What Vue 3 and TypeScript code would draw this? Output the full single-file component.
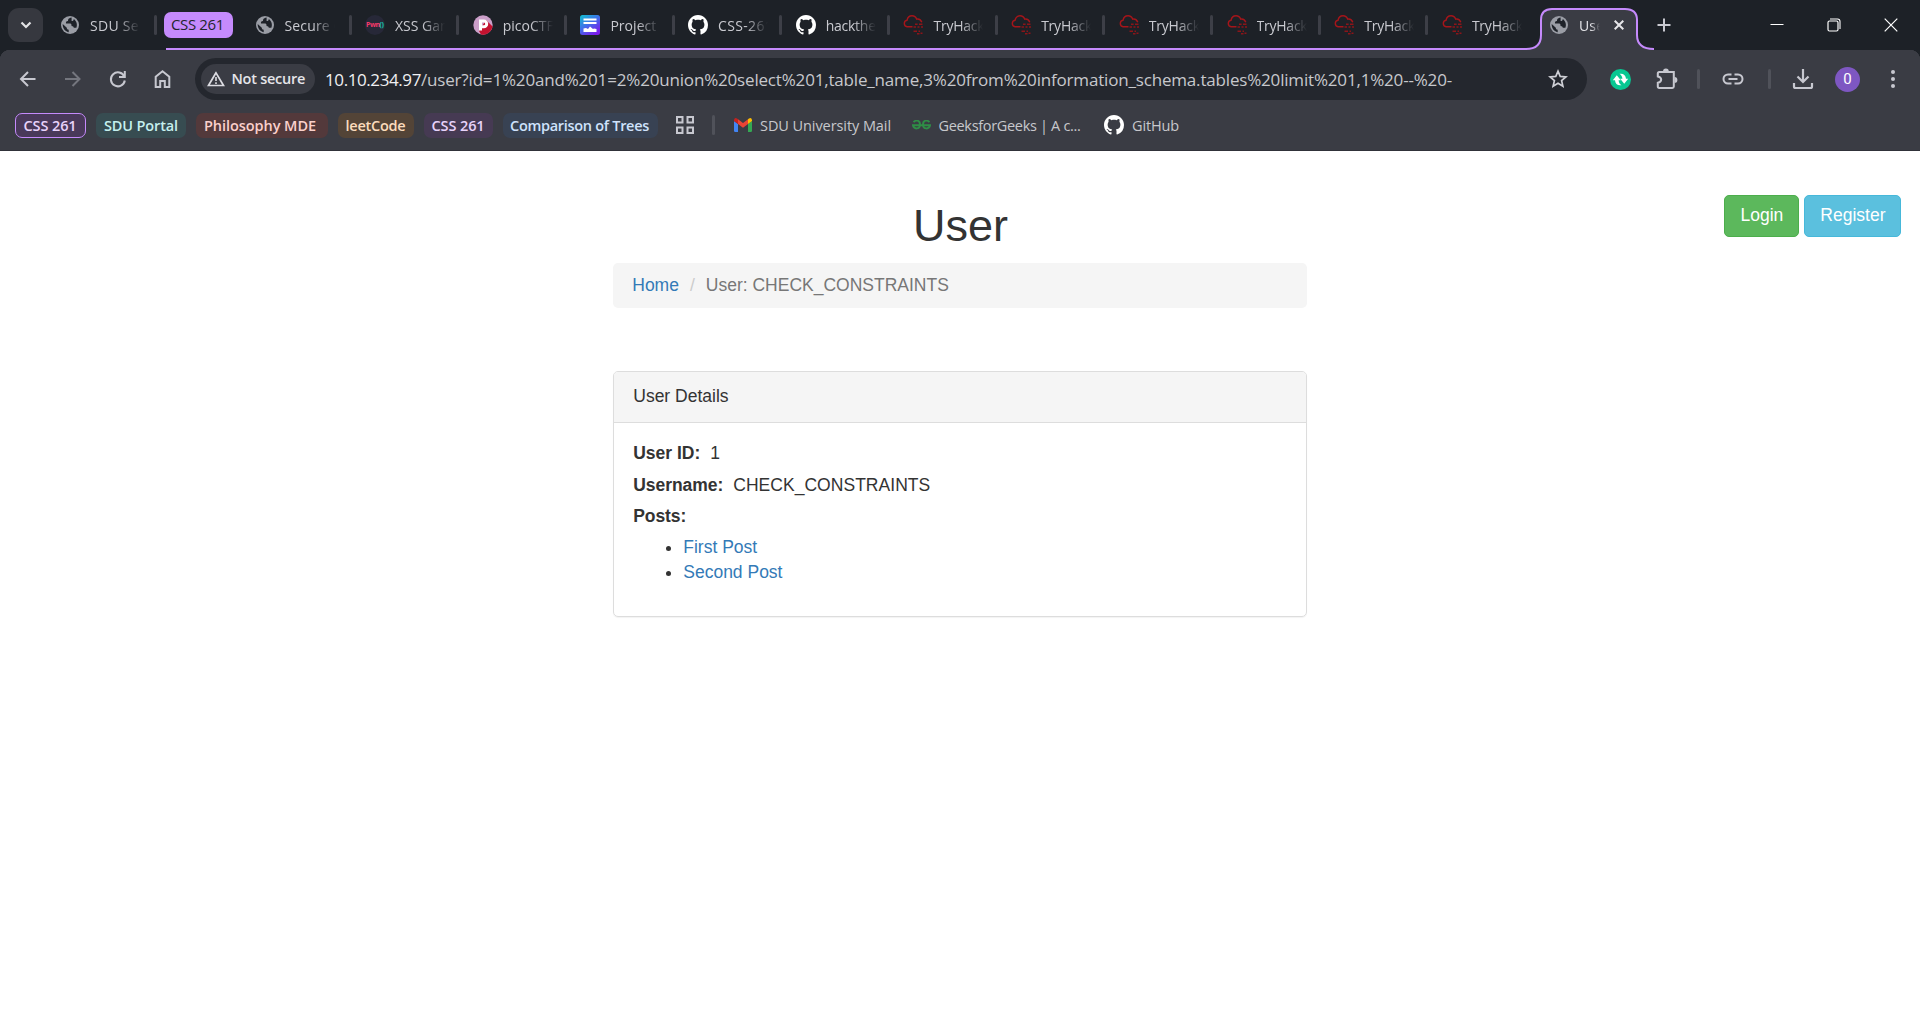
<script setup lang="ts">
import type { Directive } from 'vue'

interface Tab { icon: string; title: string; w: number }
interface Group { label: string; w: number; tw: number; pad: number; bg: string; fg: string; open?: boolean }

const tabs: Tab[] = [
  { icon: 'globe', title: 'Secure C', w: 58 },
  { icon: 'pwn', title: 'XSS Gam', w: 58 },
  { icon: 'pico', title: 'picoCTF', w: 51 },
  { icon: 'project', title: 'Project', w: 46 },
  { icon: 'github', title: 'CSS-261', w: 55 },
  { icon: 'github', title: 'hackthe', w: 50 },
  ...Array.from({ length: 6 }, () => ({ icon: 'thm', title: 'TryHack', w: 51 })),
]

const groups: Group[] = [
  { label: 'CSS 261', w: 71, tw: 53, pad: 7.5, bg: '#49395a', fg: '#e8d3fb', open: true },
  { label: 'SDU Portal', w: 90, tw: 74, pad: 8, bg: '#374c51', fg: '#c5f0ee' },
  { label: 'Philosophy MDE', w: 132, tw: 112, pad: 8, bg: '#53393b', fg: '#fbd0cb' },
  { label: 'leetCode', w: 76, tw: 60, pad: 7.5, bg: '#534437', fg: '#fbdcbd' },
  { label: 'CSS 261', w: 69, tw: 53, pad: 7.5, bg: '#463a53', fg: '#e8d3fb' },
  { label: 'Comparison of Trees', w: 155, tw: 139, pad: 7, bg: '#384253', fg: '#cfe2fc' },
]

// Spreads or tightens a label so that it fills the given width.
const vFit: Directive<HTMLElement, number> = {
  mounted(el, { value }) {
    const n = (el.textContent ?? '').length
    const spacing = (value - el.getBoundingClientRect().width) / n
    el.style.letterSpacing = `${spacing}px`
  },
}
</script>

<template>
  <svg width="0" height="0" class="defs">
    <symbol id="globe" viewBox="0 0 20 20">
      <circle cx="10" cy="10" r="9" fill="#9a9da5" />
      <path d="M11.6 2.6C8 3.6 8.200 4.400 8 6c-1.900.2-2.200 1.100-2 2.400h4.200c1.300.2 1.400 1.400 1.300 2.500 1.700.1 2 .6 2.300 1.800h2.600c1.300-3.500 0-7-2.600-8.800 0 1.400-.8 2.100-2.200 2V2.600zM2.700 9c-.2 4 2 7.300 6 8.200v-2.400c-1.300-.2-1.900-.9-1.900-2.100z" fill="#1e2229" class="land" />
    </symbol>
    <symbol id="pwn" viewBox="0 0 20 20"><circle cx="10" cy="10" r="10" fill="#272838" /></symbol>
    <symbol id="pico" viewBox="0 0 20 20">
      <circle cx="10" cy="10" r="9.700" fill="#cb9fc9" />
      <path d="M13 5l6.600 6.500A9.700 9.700 0 0 1 8 19.500L6 16z" fill="#c4122f" />
      <path d="M7.500 15.500V6h3.300a2.900 2.900 0 0 1 0 5.800H8" fill="none" stroke="#fff" stroke-width="3" />
    </symbol>
    <symbol id="project" viewBox="0 0 20 20">
      <defs><linearGradient id="pg" x1="0" y1="0" x2=".7" y2="1"><stop offset="0" stop-color="#10c3cf" /><stop offset=".5" stop-color="#3f70ea" /><stop offset="1" stop-color="#7a1bea" /></linearGradient></defs>
      <rect width="20" height="20" rx="2.500" fill="url(#pg)" />
      <path d="M3.500 3.500h13v2h-13zM3.500 7h13v2h-13zM3.500 17v-3.500l2.500-.5 2 1 2-2.500 3 2.500 1-.5 2.500.5v3z" fill="#fff" />
    </symbol>
    <symbol id="github" viewBox="0 0 16 16">
      <path fill="#fff" d="M8 0C3.580 0 0 3.580 0 8c0 3.540 2.290 6.530 5.470 7.590.4.070.55-.17.55-.38 0-.19-.01-.82-.01-1.490-2.010.37-2.530-.49-2.690-.94-.09-.23-.48-.94-.82-1.130-.28-.15-.68-.52-.01-.53.63-.01 1.080.58 1.230.82.72 1.210 1.870.87 2.330.66.07-.52.28-.87.51-1.070-1.780-.2-3.640-.89-3.640-3.950 0-.87.31-1.590.82-2.150-.08-.2-.36-1.020.08-2.120 0 0 .67-.21 2.200.82.64-.18 1.320-.27 2-.27s1.360.09 2 .27c1.530-1.040 2.200-.82 2.200-.82.44 1.100.16 1.920.08 2.120.51.56.82 1.270.82 2.150 0 3.070-1.870 3.750-3.650 3.950.29.25.54.73.54 1.480 0 1.070-.01 1.930-.01 2.200 0 .21.15.46.55.38A8.010 8.010 0 0 0 16 8c0-4.420-3.580-8-8-8z" />
    </symbol>
    <symbol id="thm" viewBox="0 0 20 20">
      <path d="M9.500 11.800H4.100a3.300 3.300 0 0 1-.1-6.500C4.600 2.500 6.500.8 9 .8c2.300 0 3.900 1.300 4.600 3.300 2.400-.4 4.500 1.100 5.200 3.200" fill="none" stroke="#a5151a" stroke-width="1.400" />
      <path d="M12 9.300h2.600M16 9.300h3.500M10.500 12h2.500M14.500 12h2M18 12h2M10.500 16.300h3.500M15.500 16.300h1.500M14 18.800h2.500M17.500 18.300h2" stroke="#8c1519" stroke-width="1.500" />
    </symbol>
  </svg>

  <div class="browser">
    <header class="strip">
      <div class="search"><svg width="12" height="8" viewBox="0 0 12 8"><path d="M1.500 1.500L6 6l4.500-4.500" fill="none" stroke="#e3e3e6" stroke-width="2.200" /></svg></div>
      <div class="tab lone">
        <svg class="fav"><use href="#globe" /></svg>
        <div class="title"><span v-fit="56">SDU Sec</span></div><i class="bar"></i>
      </div>
      <div class="line">
        <div class="group"><span v-fit="53">CSS 261</span></div>
        <div v-for="(t, i) in tabs" :key="i" class="tab">
          <div class="favbox"><svg class="fav"><use :href="'#' + t.icon" /></svg><span v-if="t.icon === 'pwn'" class="pwn">Pwn<b>()</b></span></div>
          <div class="title"><span v-fit="t.w">{{ t.title }}</span></div>
          <i v-if="i < tabs.length - 1" class="bar"></i>
        </div>
      </div>
      <div class="active">
        <svg class="shape" width="128" height="50" viewBox="0 0 128 50">
          <path d="M0 49C10 49 15 44 15 35V20Q15 9 26 9H99Q111 9 111 20V35C111 44 117 49 128 49V50H0z" fill="#3a3c44" />
          <path d="M0 49C10 49 15 44 15 35V20Q15 9 26 9H99Q111 9 111 20V35C111 44 117 49 128 49" fill="none" stroke="#c58afc" stroke-width="2" />
        </svg>
        <svg class="fav on"><use href="#globe" /></svg>
        <div class="title"><span v-fit="31">User</span></div>
        <svg class="x" width="10" height="10" viewBox="0 0 10 10"><path d="M.7.7l8.600 8.600M9.300.7L.7 9.300" stroke="#e6e6e9" stroke-width="2" /></svg>
      </div>
      <svg class="plus" width="14" height="14" viewBox="0 0 14 14"><path d="M7 .5v13M.5 7h13" stroke="#c9cad1" stroke-width="2" /></svg>
      <div class="win">
        <svg width="14" height="14" viewBox="0 0 14 14"><path d="M.5 6.500h13" stroke="#fff" /></svg>
        <svg width="14" height="14" viewBox="0 0 14 14"><rect x="1" y="3" width="10" height="10" rx="1.500" fill="none" stroke="#fff" stroke-width="1.200" /><path d="M3 1h7.500Q13 1 13 3.500V11" fill="none" stroke="#fff" stroke-width="1.100" /></svg>
        <svg width="14" height="14" viewBox="0 0 14 14"><path d="M.7.7l12.600 12.600M13.300.7L.7 13.300" stroke="#fff" stroke-width="1.200" /></svg>
      </div>
    </header>

    <div class="chrome">
      <nav class="tools">
        <svg class="ic" viewBox="0 0 20 20"><path d="M17.500 10H3.500M10 3L3 10l7 7" /></svg>
        <svg class="ic dim" viewBox="0 0 20 20"><path d="M2 10h14M9.500 3l7 7-7 7" /></svg>
        <svg class="ic" viewBox="0 0 20 20"><path d="M16.300 7.500A7 7 0 1 0 16.800 11.500M16.800 2v6H11" /></svg>
        <svg class="ic" viewBox="0 0 20 20"><path d="M2.700 18V7.800L9.500 2.200l6.800 5.600V18h-4.500v-6H7.200v6z" /></svg>
        <div class="omni">
          <div class="secure">
            <svg width="18" height="16" viewBox="0 0 18 16"><path d="M9 1.800L1.500 14.500h15z" fill="none" stroke="#dcdce2" stroke-width="1.700" /><path d="M9 6v4M9 11.300v1.700" stroke="#dcdce2" stroke-width="1.600" /></svg>
            <span v-fit="73.500">Not secure</span>
          </div>
          <div class="url"><span v-fit="96" class="host">10.10.234.97</span><span v-fit="1031">/user?id=1%20and%201=2%20union%20select%201,table_name,3%20from%20information_schema.tables%20limit%201,1%20--%20-</span></div>
          <svg class="star" width="20" height="20" viewBox="0 0 20 20"><path d="M10 2.200l2.200 5.200 5.700.5-4.300 3.700 1.300 5.600-4.900-3-4.900 3 1.300-5.600-4.300-3.700 5.700-.5z" fill="none" stroke="#cfd0d6" stroke-width="1.700" /></svg>
        </div>
        <div class="exts">
          <svg class="green" width="21" height="21" viewBox="0 0 21 21"><circle cx="10.500" cy="10.500" r="10.500" fill="#08c792" /><g fill="#fff"><path d="M2.800 11.200L6.800 6.200l4 5H8.600c.2 2.200 1 3.800 2.900 5C7.500 16.800 5.200 14.700 5 11.200z" /><path d="M2.800 11.200L6.800 6.200l4 5H8.600c.2 2.200 1 3.800 2.900 5C7.500 16.800 5.200 14.700 5 11.200z" transform="rotate(180 10.500 10.500)" /></g></svg>
          <svg class="puzzle" width="22" height="22" viewBox="0 0 22 22"><path d="M3.200 4h14.600v14.600q0 1.400-1.400 1.400H3.200q-1.400 0-1.400-1.400v-3.800c4.500-.8 4.500-5.600 0-6.400V5.400Q1.800 4 3.200 4z" fill="none" stroke="#c7c8d0" stroke-width="2" /><path d="M7 3.500a2.900 2.900 0 0 1 5.800 0zM18.500 9a2.900 2.900 0 0 1 0 5.800z" fill="#c7c8d0" /></svg>
          <i class="bar"></i>
          <svg class="link" width="22" height="12" viewBox="0 0 22 12"><path d="M9.500 1.500H6a4.500 4.500 0 0 0 0 9h3.500M12.500 1.500H16a4.500 4.500 0 0 1 0 9h-3.500M6.500 6h9" fill="none" stroke="#c7c8d0" stroke-width="2" /></svg>
          <i class="bar b2"></i>
          <svg class="down" width="22" height="22" viewBox="0 0 22 22"><path d="M11 1v12.500M5.500 8.500L11 14l5.500-5.500M2 15v3.500q0 1.500 1.500 1.500h15q1.500 0 1.500-1.500V15" fill="none" stroke="#c7c8d0" stroke-width="2.200" /></svg>
          <div class="me">0</div>
          <svg class="dots" width="6" height="20" viewBox="0 0 6 20"><g fill="#c7c8d0"><circle cx="3" cy="3" r="2" /><circle cx="3" cy="10" r="2" /><circle cx="3" cy="17" r="2" /></g></svg>
        </div>
      </nav>
      <nav class="marks">
        <div v-for="(g, i) in groups" :key="i" class="chip" :class="{ open: g.open }" :style="{ width: g.w + 'px', paddingLeft: g.pad + 'px', background: g.bg, color: g.fg }"><span v-fit="g.tw">{{ g.label }}</span></div>
        <svg class="grid" width="20" height="20" viewBox="0 0 20 20"><path d="M2 2h5.500v5.500H2zM12.500 2H18v5.500h-5.500zM2 12.500h5.500V18H2zM12.500 12.500H18V18h-5.500z" fill="none" stroke="#c7c8d0" stroke-width="2" /></svg>
        <i class="bar"></i>
        <div class="mark m1"><svg width="18" height="14" viewBox="0 0 18 14"><path d="M0 3l4 3v8H1.200Q0 14 0 12.800z" fill="#4285f4" /><path d="M18 3l-4 3v8h2.800q1.200 0 1.200-1.200z" fill="#34a853" /><path d="M4 1.200l5 3.800 5-3.800V6L9 9.800 4 6z" fill="#ea4335" /><path d="M0 3V2Q.5-.8 3 .4L4 1.200V6z" fill="#c5221f" /><path d="M18 3V2Q17.500-.8 15 .4L14 1.200V6z" fill="#fbbc04" /></svg><span v-fit="131">SDU University Mail</span></div>
        <div class="mark m2"><svg width="19" height="10" viewBox="0 0 19 10"><path d="M1.500 2.200C3.500-.2 8-.2 8 4.500S2 10 .9 5.300H18.100C17 10 11 9.200 11 4.500S15.500-.2 17.500 2.200" fill="none" stroke="#2f8d46" stroke-width="1.900" /></svg><span v-fit="142">GeeksforGeeks | A c...</span></div>
        <div class="mark m3"><svg width="20" height="20"><use href="#github" /></svg><span v-fit="47">GitHub</span></div>
      </nav>
    </div>

    <main class="page">
      <div class="auth"><a class="btn login">Login</a><a class="btn reg">Register</a></div>
      <div class="container">
        <h1>User</h1>
        <ol class="crumbs"><li><a>Home</a></li><li class="sep">/</li><li class="cur"><span v-fit="243">User: CHECK_CONSTRAINTS</span></li></ol>
        <section class="panel">
          <div class="head">User Details</div>
          <div class="body">
            <p><b v-fit="67">User ID:</b><span class="val">1</span></p>
            <p><b v-fit="90">Username:</b><span v-fit="197" class="val">CHECK_CONSTRAINTS</span></p>
            <p><b v-fit="53">Posts:</b></p>
            <ul><li><a>First Post</a></li><li><a>Second Post</a></li></ul>
          </div>
        </section>
      </div>
    </main>
  </div>
</template>

<style>
body { margin: 0; background: #fff; overflow: hidden; }
</style>

<style scoped>
* { box-sizing: border-box; }
svg { display: block; flex: none; }
.defs { position: absolute; }
.browser { width: 1920px; height: 1010px; display: flex; flex-direction: column; font: 15px/20px "Open Sans", "Noto Sans", sans-serif; overflow: hidden; background: #fff; }
span, b { white-space: nowrap; display: inline-block; }

.strip { height: 50px; flex: none; background: #1d2127; display: flex; align-items: center; padding-left: 8px; color: #c9cad0; font-size: 14px; }
.search { width: 35px; height: 34px; border-radius: 11px; background: #36383f; display: flex; align-items: center; justify-content: center; flex: none; }
.tab { width: 107.700px; height: 50px; flex: none; display: flex; align-items: center; padding-left: 13.500px; }
.tab.lone { width: 121px; padding-left: 17px; }
.fav { width: 20px; height: 20px; }
.favbox { position: relative; }
.pwn { position: absolute; left: 1px; top: 5px; font: bold 7px/10px "Open Sans", sans-serif; letter-spacing: -.5px; color: #f5386a; }
.pwn b { color: #19a99b; }
.title { width: 50px; margin-left: 10px; overflow: hidden; flex: none; padding-top: 1px; -webkit-mask-image: linear-gradient(90deg, #000 55%, transparent 100%); mask-image: linear-gradient(90deg, #000 55%, transparent 100%); }
.bar { width: 3px; height: 20px; border-radius: 2px; background: #3d3f47; flex: none; }
.tab .bar { margin-left: auto; margin-right: 0; }
.tab.lone .bar { margin-right: 7px; }
.line { width: 1362px; height: 50px; display: flex; align-items: center; flex: none; background: linear-gradient(#c58afc, #c58afc) 2px 48px / 100% 2px no-repeat; }
.group { width: 69px; height: 26px; margin-right: 8px; border-radius: 7px; background: #c58afc; color: #22252c; padding: 2px 0 0 7px; flex: none; font-size: 15px; }
.group + .tab { width: 110.500px; }
.active { position: relative; width: 128px; height: 50px; display: flex; align-items: center; padding-left: 23px; color: #e6e6ea; flex: none; }
.shape { position: absolute; left: 0; top: 0; }
.active .fav, .active .title, .x { position: relative; }
.active .title { width: 21px; }
.x { margin-left: 14px; }
.plus { margin-left: 3px; }
.win { display: flex; width: 128px; margin-left: auto; margin-right: 22px; justify-content: space-between; position: relative; top: -.5px; }

.chrome { height: 101px; flex: none; border-bottom: 1px solid #303239; background: radial-gradient(circle at 10px 10px, #3a3c44 10px, #1d2127 10.500px) 0 0 / 10px 10px no-repeat, radial-gradient(circle at 0 10px, #3a3c44 10px, #1d2127 10.500px) 100% 0 / 10px 10px no-repeat, #3a3c44; }
.tools { height: 42px; margin-top: 8px; display: flex; align-items: center; padding-left: 18px; }
.ic { width: 20px; height: 20px; margin-right: 25px; fill: none; stroke: #c7c8d0; stroke-width: 2; }
.ic.dim { stroke: #74767e; }
.ic:nth-child(4) { margin-right: 22px; }
.omni { width: 1392px; height: 42px; border-radius: 21px; background: #24272e; display: flex; align-items: center; padding-left: 6px; flex: none; }
.secure { width: 114px; height: 30px; border-radius: 15px; background: #3a3c44; display: flex; align-items: center; padding-left: 6px; gap: 6.500px; color: #e5e5e9; font-weight: 600; font-size: 14.500px; flex: none; }
.url { margin-left: 10px; color: #c7c8cc; font-size: 17px; line-height: 24px; flex: 1; white-space: nowrap; padding-top: 1px; }
.host { color: #f0f0f2; }
.star { margin-right: 19px; }
.exts { display: flex; align-items: center; }
.green { margin-left: 23px; }
.puzzle { margin-left: 24.500px; }
.exts .bar { margin-left: 19.500px; background: #50525a; }
.link { margin-left: 21.500px; }
.exts .b2 { margin-left: 24px; }
.down { margin-left: 21.500px; }
.me { width: 25px; height: 25px; margin-left: 21px; border-radius: 50%; background: #7e57c2; color: #fff; font: 15px/25px Roboto, sans-serif; text-align: center; }
.dots { margin-left: 29.500px; }

.marks { height: 26px; margin-top: 12px; padding-left: 15px; display: flex; align-items: center; color: #c7c8cc; font-size: 14.500px; }
.chip { height: 25px; border-radius: 7px; margin-right: 10px; flex: none; font-weight: 600; font-size: 14.500px; line-height: 25px; }
.chip.open { border: 1.500px solid #c58afc; line-height: 23px; }
.grid { margin-left: 7px; }
.marks .bar { margin-left: 17px; background: #50525a; }
.mark { display: flex; align-items: center; gap: 8px; }
.mark span { padding-top: 1px; }
.m1 { margin-left: 19px; }
.m2 { margin-left: 20.500px; }
.m3 { margin-left: 23.500px; }

.page { position: relative; flex: 1; font: 17.500px/25px "Liberation Sans", Arial, sans-serif; color: #333; }
.auth { position: absolute; right: 19px; top: 44px; display: flex; gap: 5px; }
.btn { height: 42px; border: 1px solid; border-radius: 5px; padding: 7px 14.500px 7px 15.500px; color: #fff; line-height: 25px; }
.login { background: #5cb85c; border-color: #4cae4c; }
.reg { background: #5bc0de; border-color: #46b8da; }
.container { width: 694px; margin: 0 auto; padding-top: 50px; }
h1 { font-size: 45px; line-height: 49.500px; font-weight: 400; margin: 0 0 12.500px; padding-left: 1px; text-align: center; }
.crumbs { display: flex; list-style: none; height: 45px; margin: 0; padding: 10px 19.250px; background: #f5f5f5; border-radius: 5px; }
.crumbs .sep { color: #ccc; padding: 0 11px; }
.crumbs .cur { color: #777; }
a { color: #337ab7; }
.auth a { color: #fff; }
.panel { height: 246px; margin-top: 63px; border: 1px solid #ddd; border-radius: 5px; box-shadow: 0 1px 1px rgba(0, 0, 0, .05); }
.head { height: 51px; padding: 12px 19.250px; background: #f5f5f5; border-bottom: 1px solid #ddd; border-radius: 4px 4px 0 0; }
.body { padding: 18.300px 19.250px; }
p { margin: 0 0 6.250px; height: 25px; display: flex; }
.val { margin-left: 10px; }
ul { margin: 0; padding-left: 50px; }
</style>
